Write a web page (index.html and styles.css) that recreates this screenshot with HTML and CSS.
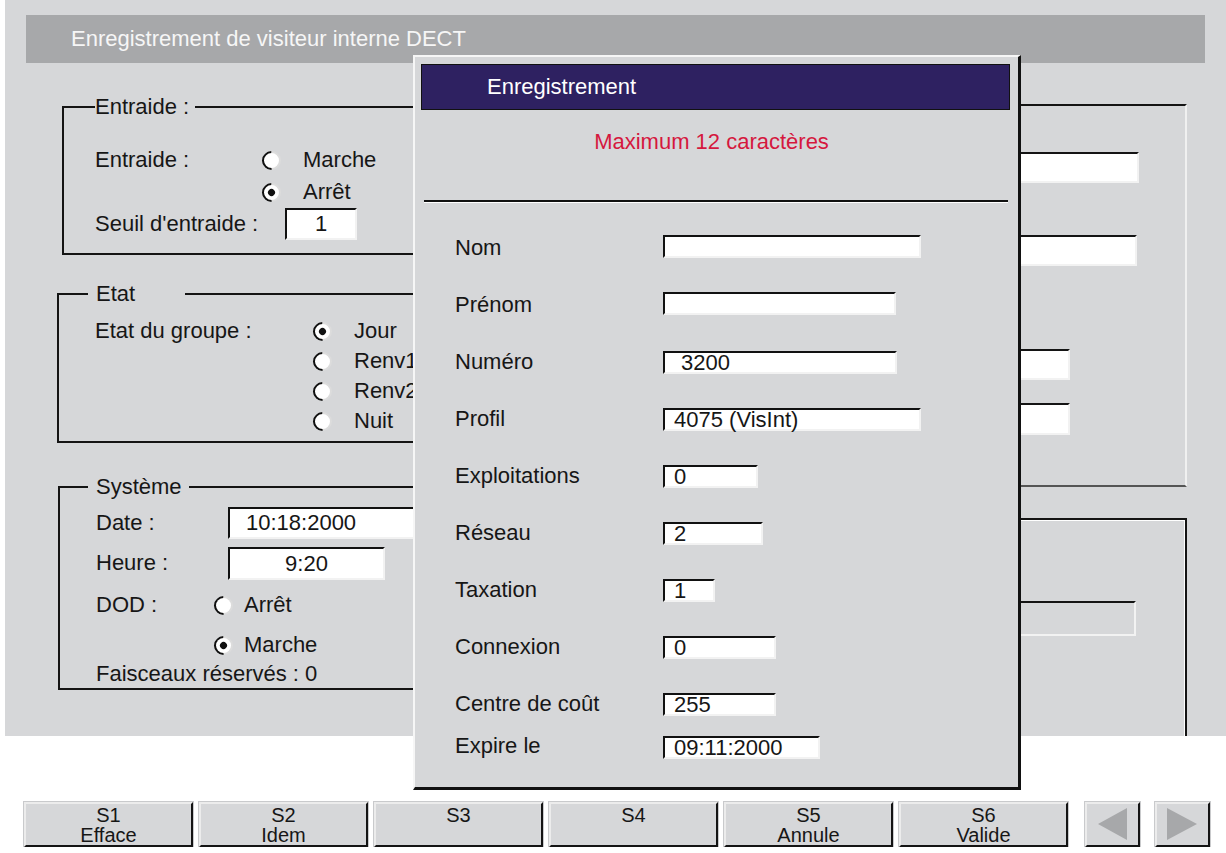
FILE: index.html
```html
<!DOCTYPE html>
<html lang="fr">
<head>
  <meta charset="UTF-8">
  <meta name="viewport" content="width=device-width, initial-scale=1.0">
  <title>Enregistrement de visiteur interne DECT</title>
  <link rel="stylesheet" href="styles.css">
</head>
<body>

  <!-- Ecran principal -->
  <div class="screen">
    <div class="titlebar">Enregistrement de visiteur interne DECT</div>

    <div class="content">

      <!-- Colonne gauche -->
      <div class="col-left">

        <fieldset class="group group-entraide">
          <legend>Entraide :</legend>
          <div class="row">
            <span class="lbl">Entraide :</span>
            <span class="radio"></span><span class="opt">Marche</span>
          </div>
          <div class="row">
            <span class="lbl"></span>
            <span class="radio checked"></span><span class="opt">Arrêt</span>
          </div>
          <div class="row">
            <span class="lbl-seuil">Seuil d'entraide :</span>
            <span class="field field-seuil">1</span>
          </div>
        </fieldset>

        <fieldset class="group group-etat">
          <legend>Etat</legend>
          <div class="etat-body">
            <span class="lbl">Etat du groupe :</span>
            <div class="radio-list">
              <div class="row"><span class="radio checked"></span><span class="opt">Jour</span></div>
              <div class="row"><span class="radio"></span><span class="opt">Renv1</span></div>
              <div class="row"><span class="radio"></span><span class="opt">Renv2</span></div>
              <div class="row"><span class="radio"></span><span class="opt">Nuit</span></div>
            </div>
          </div>
        </fieldset>

        <fieldset class="group group-systeme">
          <legend>Système</legend>
          <div class="row row-date">
            <span class="lbl">Date :</span>
            <span class="field field-date">10:18:2000</span>
          </div>
          <div class="row row-heure">
            <span class="lbl">Heure :</span>
            <span class="field field-heure">9:20</span>
          </div>
          <div class="row row-dod">
            <span class="lbl lbl-dod">DOD :</span>
            <span class="radio"></span><span class="opt">Arrêt</span>
          </div>
          <div class="row row-marche">
            <span class="lbl lbl-dod"></span>
            <span class="radio checked"></span><span class="opt">Marche</span>
          </div>
          <div class="row row-faisceaux">
            <span>Faisceaux réservés : 0</span>
          </div>
        </fieldset>
      </div>

      <!-- Colonne droite (masquée en partie par la fenêtre) -->
      <div class="col-right">
        <div class="box-a">
          <span class="rfield rf-1"></span>
          <span class="rfield rf-2"></span>
          <span class="rfield rf-3"></span>
          <span class="rfield rf-4"></span>
        </div>
        <div class="box-b">
          <span class="rfield rf-5"></span>
        </div>
      </div>
    </div>
  </div>

  <!-- Fenêtre Enregistrement -->
  <div class="modal">
    <div class="modal-header">Enregistrement</div>
    <div class="modal-msg">Maximum 12 caractères</div>
    <div class="modal-sep"></div>

    <div class="modal-form">
      <div class="mrow"><span class="mlbl">Nom</span><span class="mfield mf-nom"></span></div>
      <div class="mrow"><span class="mlbl">Prénom</span><span class="mfield mf-prenom"></span></div>
      <div class="mrow"><span class="mlbl">Numéro</span><span class="mfield mf-numero">3200</span></div>
      <div class="mrow"><span class="mlbl">Profil</span><span class="mfield mf-profil">4075 (VisInt)</span></div>
      <div class="mrow"><span class="mlbl">Exploitations</span><span class="mfield mf-expl">0</span></div>
      <div class="mrow"><span class="mlbl">Réseau</span><span class="mfield mf-reseau">2</span></div>
      <div class="mrow"><span class="mlbl">Taxation</span><span class="mfield mf-tax">1</span></div>
      <div class="mrow"><span class="mlbl">Connexion</span><span class="mfield mf-conn">0</span></div>
      <div class="mrow"><span class="mlbl">Centre de coût</span><span class="mfield mf-cout">255</span></div>
      <div class="mrow mrow-last"><span class="mlbl">Expire le</span><span class="mfield mf-expire">09:11:2000</span></div>
    </div>
  </div>

  <!-- Touches programmables -->
  <div class="softkeys">
    <div class="softkey">S1<br>Efface</div>
    <div class="softkey">S2<br>Idem</div>
    <div class="softkey">S3</div>
    <div class="softkey">S4</div>
    <div class="softkey">S5<br>Annule</div>
    <div class="softkey">S6<br>Valide</div>
    <div class="arrows">
      <div class="arrowkey">
        <svg width="51" height="41" viewBox="0 0 51 41"><polygon points="40,4 11,20 40,36" fill="#a7a8aa"/></svg>
      </div>
      <div class="arrowkey">
        <svg width="51" height="41" viewBox="0 0 51 41"><polygon points="10,4 40,20 10,36" fill="#a7a8aa"/></svg>
      </div>
    </div>
  </div>

</body>
</html>
```

FILE: styles.css
```css
body {
  font-family: "Liberation Sans", Arial, Helvetica, sans-serif;
  font-size: 22px;
  color: #161616;
  margin: 0;
  padding: 0;
  background-color: #fff;
}

/* Ecran */
.screen {
  margin-left: 5px;
  height: 736px;
  padding-top: 15px;
  box-sizing: border-box;
  background-color: #d6d7d9;
  overflow: hidden;
}

.titlebar {
  margin: 0 21px;
  height: 48px;
  line-height: 48px;
  padding-left: 45px;
  background-color: #a7a8aa;
  color: #f6f6f6;
}

.content {
  display: grid;
  grid-template-columns: 560px 540px;
  column-gap: 30px;
  padding-left: 52px;
}

/* Cadres */
.group {
  margin: 0;
  padding: 0;
  border: 2px solid #141414;
  min-inline-size: 0;
}

.group legend {
  line-height: 26px;
  padding: 0;
}

.row {
  display: flex;
  align-items: center;
}

.radio {
  width: 19px;
  height: 19px;
  box-sizing: border-box;
  border-radius: 50%;
  background-color: #fff;
  border: 2px solid;
  border-color: #111 #dcdcdc #dcdcdc #111;
  transform: rotate(-45deg);
  position: relative;
  flex-shrink: 0;
}

.radio.checked::after {
  content: "";
  position: absolute;
  left: 4px;
  top: 4px;
  width: 7px;
  height: 7px;
  border-radius: 50%;
  background-color: #111;
}

.opt {
  margin-left: 22px;
}

.field {
  display: inline-block;
  box-sizing: border-box;
  background-color: #fff;
  border: 2px solid;
  border-color: #111 #f2f2f2 #f2f2f2 #111;
}

/* Entraide */
.group-entraide {
  margin: 31px 0 0 5px;
  padding: 24px 0 13px 31px;
}

.group-entraide legend {
  margin-left: 0;
  padding-right: 6px;
}

.group-entraide .row {
  height: 32px;
}

.group-entraide .lbl {
  width: 167px;
}

.lbl-seuil {
  width: 190px;
}

.field-seuil {
  width: 72px;
  height: 32px;
  line-height: 28px;
  text-align: center;
}

/* Etat */
.group-etat {
  margin-top: 26px;
  padding: 9px 0 5px 36px;
}

.group-etat legend {
  margin-left: -7px;
  padding: 0 50px 0 8px;
}

.etat-body {
  display: flex;
}

.etat-body .lbl {
  width: 218px;
  line-height: 30px;
}

.radio-list .row {
  height: 30px;
}

/* Système */
.group-systeme {
  margin: 31px 0 0 1px;
  padding: 0 0 0 36px;
}

.group-systeme legend {
  margin-left: -8px;
  padding: 0 7px 0 8px;
}

.group-systeme .lbl {
  width: 132px;
}

.group-systeme .lbl-dod {
  width: 118px;
}

.group-systeme .opt {
  margin-left: 11px;
}

.row-date { height: 46px; }
.row-heure { height: 34px; }
.row-dod { height: 50px; }
.row-marche { height: 30px; }
.row-faisceaux { height: 28px; }

.field-date {
  width: 260px;
  height: 32px;
  line-height: 28px;
  padding-left: 16px;
}

.field-heure {
  width: 157px;
  height: 33px;
  line-height: 30px;
  text-align: center;
}

/* Colonne droite */
.col-right {
  display: flex;
  flex-direction: column;
}

.box-a {
  margin-top: 41px;
  display: flex;
  flex-direction: column;
  align-items: flex-end;
  padding: 0 46px 50px 0;
  border-top: 2px solid #141414;
  border-right: 2px solid #f0f0f0;
  border-bottom: 2px solid #555;
}

.box-b {
  margin-top: 31px;
  height: 260px;
  display: flex;
  flex-direction: column;
  align-items: flex-end;
  padding-right: 49px;
  border-top: 2px solid #141414;
  border-right: 2px solid #141414;
  box-shadow: inset -1px 1px 0 #fff;
}

.rfield {
  display: block;
  box-sizing: border-box;
  background-color: #fff;
  border: 2px solid;
  border-color: #141414 #f2f2f2 #f2f2f2 #141414;
}

.rf-1 { width: 220px; height: 31px; margin-top: 46px; }
.rf-2 { width: 220px; height: 31px; margin-top: 52px; margin-right: 2px; }
.rf-3 { width: 150px; height: 31px; margin-top: 83px; margin-right: 69px; }
.rf-4 { width: 150px; height: 32px; margin-top: 23px; margin-right: 69px; }
.rf-5 { width: 220px; height: 35px; margin-top: 81px; background-color: #d6d7d9; }

/* Fenêtre Enregistrement */
.modal {
  position: absolute;
  left: 413px;
  top: 55px;
  width: 608px;
  height: 735px;
  box-sizing: border-box;
  background-color: #d6d7d9;
  border-style: solid;
  border-width: 2px 3px 3px 2px;
  border-color: #f6f6f6 #111 #111 #f6f6f6;
}

.modal-header {
  margin: 7px 8px 0 6px;
  height: 46px;
  box-sizing: border-box;
  border: 1px solid #111;
  background-color: #2e2161;
  color: #fff;
  line-height: 44px;
  padding-left: 65px;
}

.modal-msg {
  height: 90px;
  box-sizing: border-box;
  padding: 20px 10px 0 0;
  line-height: 24px;
  text-align: center;
  color: #d5173e;
}

.modal-sep {
  margin: 0 10px 0 9px;
  border-top: 2px solid #111;
  border-bottom: 1px solid #fff;
}

.modal-form {
  padding: 16px 0 0 40px;
}

.mrow {
  display: flex;
  align-items: center;
  height: 57px;
}

.mrow-last {
  height: 28px;
}

.mlbl {
  width: 208px;
}

.mfield {
  display: block;
  height: 23px;
  box-sizing: border-box;
  background-color: #fff;
  border: 2px solid;
  border-color: #111 #f2f2f2 #f2f2f2 #111;
  line-height: 19px;
  padding-left: 9px;
  margin-top: 2px;
}

.mf-nom { width: 258px; margin-top: -2px; }
.mf-prenom { width: 233px; margin-top: -2px; }
.mf-numero { width: 234px; padding-left: 16px; }
.mf-profil { width: 258px; }
.mf-expl { width: 95px; }
.mf-reseau { width: 100px; }
.mf-tax { width: 52px; }
.mf-conn { width: 113px; }
.mf-cout { width: 113px; }
.mf-expire { width: 157px; }

/* Touches programmables */
.softkeys {
  display: flex;
  gap: 6px;
  margin-top: 66px;
  padding-left: 24px;
}

.softkey,
.arrowkey {
  height: 45px;
  box-sizing: border-box;
  background-color: #d6d7d9;
  border: 2px solid;
  border-color: #ececec #141414 #141414 #ececec;
  box-shadow: 0 0 0 1px #c9cacc;
}

.softkey {
  width: 169px;
  padding-top: 1px;
  text-align: center;
  font-size: 20px;
  line-height: 20px;
}

.arrows {
  display: flex;
  gap: 15px;
  margin-left: 11px;
}

.arrowkey {
  width: 55px;
}

.arrowkey svg {
  display: block;
}
```
